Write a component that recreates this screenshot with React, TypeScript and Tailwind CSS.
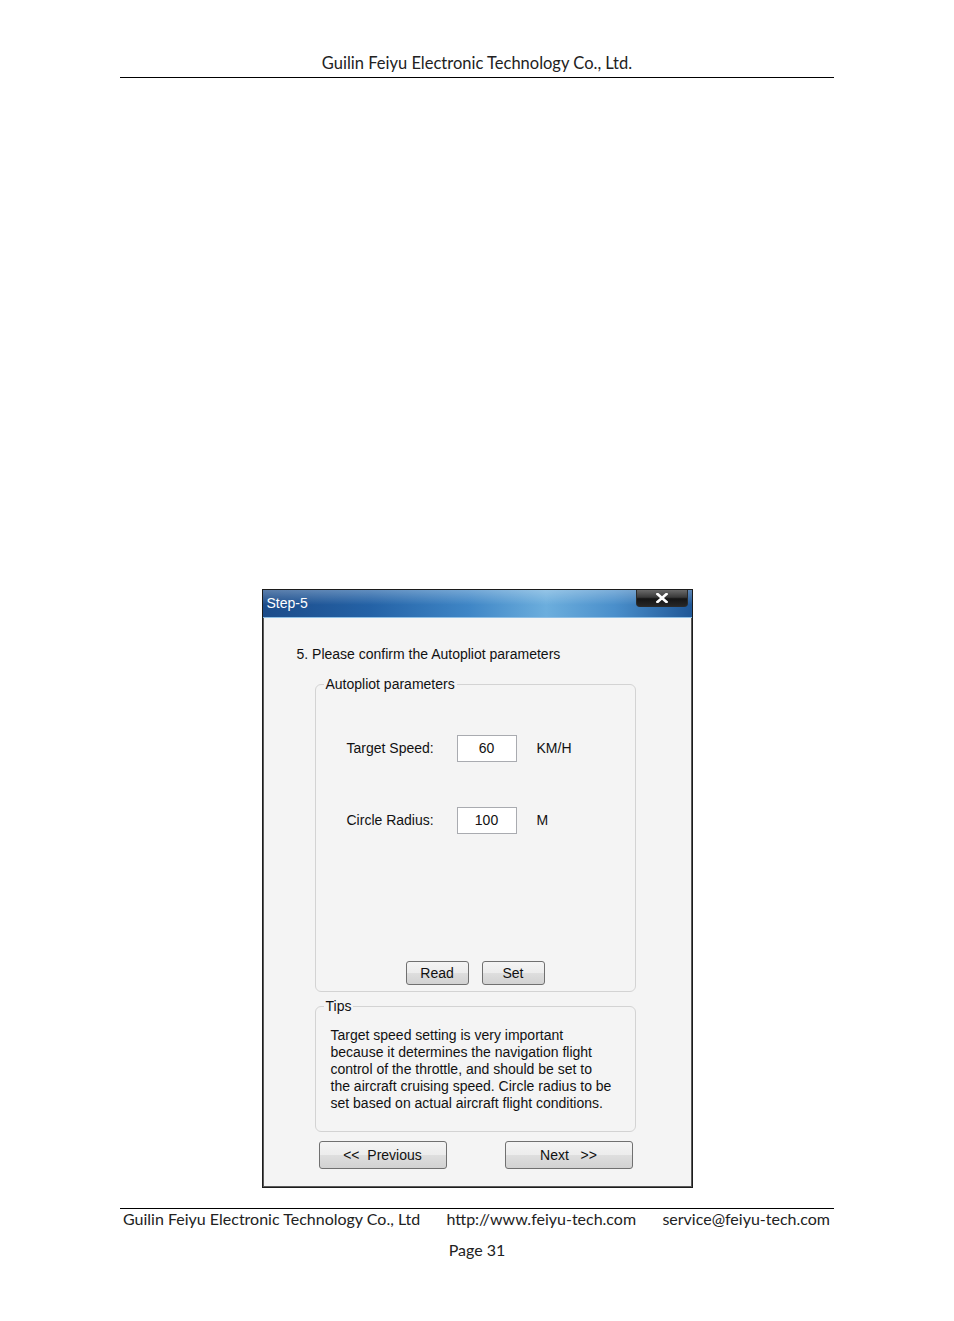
import React from "react";

const dlgFont = { fontFamily: '"Liberation Sans", Arial, sans-serif' };

function WinButton({ label, className = "" }: { label: string; className?: string }) {
    return (
        <button
            type="button"
            className={`flex items-center justify-center rounded-[3px] border border-[#707070] bg-[linear-gradient(to_bottom,#f4f4f4,#ececec_50%,#dedede_51%,#d2d2d2)] text-[14px] text-[#111] ${className}`}
        >
            {label}
        </button>
    );
}

function GroupBox({ title, className = "", children }: { title: string; className?: string; children: React.ReactNode }) {
    return (
        <div className={`relative rounded-[6px] border border-[#d3d3d3] ${className}`}>
            {/* caption sits over the top border */}
            <span className="absolute -top-[9px] left-[8px] bg-[#f4f4f4] px-[2px] text-[14px] leading-[16px] text-[#111]">
                {title}
            </span>
            {children}
        </div>
    );
}

function FieldRow({ label, value, unit }: { label: string; value: string; unit: string }) {
    return (
        <div className="flex items-center pl-[31px]">
            <span className="w-[110px] text-[14px] text-[#111]">{label}</span>
            <div className="flex h-[27px] w-[60px] items-center justify-center border border-[#a9abb0] bg-white text-[14px] text-[#111]">
                {value}
            </div>
            <span className="ml-[20px] text-[14px] text-[#111]">{unit}</span>
        </div>
    );
}

export default function App() {
    return (
        <div className="flex min-h-[1321px] w-[954px] flex-col bg-white" style={{ fontFamily: "Lato, 'Open Sans', sans-serif" }}>
            {/* Page header */}
            <div className="mx-[120px] border-b border-black pb-[4px] pt-[53px] text-center text-[16.5px] leading-[20px] text-[#222]">
                Guilin Feiyu Electronic Technology Co., Ltd.
            </div>

            {/* Dialog */}
            <div className="mx-auto mt-[511px] w-[431px] border border-[#1c1c1c] bg-[#f4f4f4]" style={dlgFont}>
                {/* Title bar */}
                <div className="flex h-[28px] items-start justify-between border-b border-[#8fc0e6] bg-[linear-gradient(to_bottom,rgba(255,255,255,0.28),rgba(255,255,255,0.05)_45%,rgba(0,0,0,0)_55%),linear-gradient(to_right,#1c4c8a,#2462a6_25%,#3f86c6_48%,#6caedd_66%,#4a8fcb_82%,#1f5797)]">
                    <span className="pl-[4px] pt-[5px] text-[14px] leading-[16px] text-white">Step-5</span>
                    <div className="mr-[4px] flex h-[17px] w-[52px] items-center justify-center rounded-b-[4px] border border-t-0 border-[#2a2a2a] bg-[linear-gradient(to_bottom,#6a6a6a,#3a3a3a_45%,#141414_55%,#262626)]">
                        <svg width="12" height="10" viewBox="0 0 12 10">
                            <path d="M1.5 1 L10.5 9 M10.5 1 L1.5 9" stroke="white" strokeWidth="2.6" strokeLinecap="square" />
                        </svg>
                    </div>
                </div>

                {/* Body */}
                <div className="flex flex-col border-x border-b border-[#5a5a5a] pb-[17px]">
                    <div className="pl-[33px] pt-[28px] text-[14px] leading-[16px] text-[#111]">
                        5. Please confirm the Autopliot parameters
                    </div>

                    <GroupBox title="Autopliot parameters" className="ml-[51px] mt-[22px] flex h-[308px] w-[321px] flex-col">
                        <div className="pt-[50px]">
                            <FieldRow label="Target Speed:" value="60" unit="KM/H" />
                        </div>
                        <div className="pt-[45px]">
                            <FieldRow label="Circle Radius:" value="100" unit="M" />
                        </div>
                        <div className="mb-[6px] mt-auto flex justify-center gap-[13px]">
                            <WinButton label="Read" className="h-[24px] w-[63px]" />
                            <WinButton label="Set" className="h-[24px] w-[63px]" />
                        </div>
                    </GroupBox>

                    <GroupBox title="Tips" className="ml-[51px] mt-[14px] h-[126px] w-[321px]">
                        <p className="pl-[15px] pt-[20px] text-[14px] leading-[17px] text-[#111]">
                            Target speed setting is very important
                            <br />
                            because it determines the navigation flight
                            <br />
                            control of the throttle, and should be set to
                            <br />
                            the aircraft cruising speed. Circle radius to be
                            <br />
                            set based on actual aircraft flight conditions.
                        </p>
                    </GroupBox>

                    <div className="ml-[55px] mt-[9px] flex w-[314px] justify-between">
                        <WinButton label="<<  Previous" className="h-[28px] w-[128px] whitespace-pre" />
                        <WinButton label="Next   >>" className="h-[28px] w-[128px] whitespace-pre" />
                    </div>
                </div>
            </div>

            {/* Page footer */}
            <div className="mx-[120px] mt-[20px] flex justify-between border-t border-black pl-[3px] pr-[4px] text-[16px] leading-[20px] text-[#222]">
                <span>Guilin Feiyu Electronic Technology Co., Ltd</span>
                <span>http://www.feiyu-tech.com</span>
                <span>service@feiyu-tech.com</span>
            </div>
            <div className="mt-[11px] text-center text-[16px] leading-[20px] text-[#222]">Page 31</div>
        </div>
    );
}
